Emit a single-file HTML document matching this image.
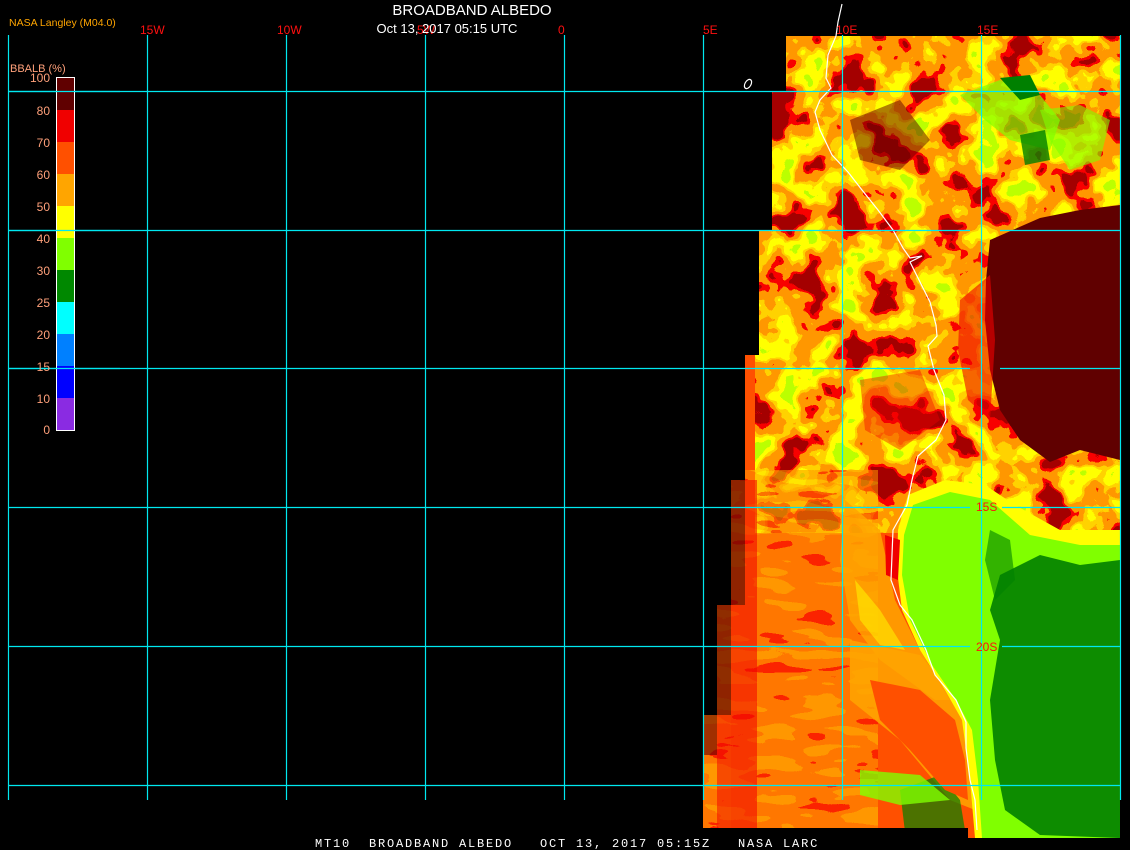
<!DOCTYPE html>
<html><head><meta charset="utf-8"><style>
html,body{margin:0;padding:0;background:#000;width:1130px;height:850px;overflow:hidden}
svg{display:block}
</style></head><body>
<svg width="1130" height="850" xmlns="http://www.w3.org/2000/svg">
<defs>
<clipPath id="data"><path d="M786,36 H1120 V838 H968 V828 H703 V715 H717 V605 H731 V480 H745 V355 H759 V230 H772 V91 H786 Z"/></clipPath>
<filter id="mot" x="0" y="0" width="100%" height="100%">
<feTurbulence type="fractalNoise" baseFrequency="0.03" numOctaves="3" seed="7" result="n"/>
<feColorMatrix in="n" type="matrix" values="1.8 0 0 0 -0.4  1.8 0 0 0 -0.4  1.8 0 0 0 -0.4  0 0 0 0 1"/>
<feComponentTransfer>
<feFuncR type="discrete" tableValues="0.376 0.376 0.94 1 1 1 1 1 0.5"/>
<feFuncG type="discrete" tableValues="0 0 0 0.31 0.31 0.65 1 1 1"/>
<feFuncB type="discrete" tableValues="0 0 0 0 0 0 0 0 0"/>
</feComponentTransfer>
</filter>
<filter id="mot2" x="0" y="0" width="100%" height="100%">
<feTurbulence type="fractalNoise" baseFrequency="0.02 0.08" numOctaves="2" seed="3" result="n"/>
<feColorMatrix in="n" type="matrix" values="1.8 0 0 0 -0.4  1.8 0 0 0 -0.4  1.8 0 0 0 -0.4  0 0 0 0 1"/>
<feComponentTransfer>
<feFuncR type="discrete" tableValues="0.94 1 1 1 1 1"/>
<feFuncG type="discrete" tableValues="0 0.31 0.31 0.31 0.65 0.65"/>
<feFuncB type="discrete" tableValues="0 0 0 0 0 0"/>
</feComponentTransfer>
</filter>
</defs>

<g clip-path="url(#data)">
<rect x="700" y="30" width="430" height="820" fill="#ff5000"/>
<rect x="755" y="33" width="370" height="500" filter="url(#mot)"/>
<path d="M960,95 L1000,80 L1040,95 L1060,120 L1050,150 L1010,140 L985,120 Z" fill="#80ff00" opacity="0.7"/>
<path d="M1000,78 L1030,75 L1040,95 L1020,100 Z" fill="#008000"/>
<path d="M1040,110 L1080,105 L1110,120 L1100,160 L1070,170 L1050,140 Z" fill="#80ff00" opacity="0.6"/>
<path d="M1020,135 L1045,130 L1050,160 L1025,165 Z" fill="#008000" opacity="0.8"/>
<path d="M990,240 L1040,218 L1080,210 L1120,205 L1120,460 L1080,450 L1050,462 L1020,440 L1000,410 L990,370 L985,320 L986,280 Z" fill="#600000"/>
<path d="M960,300 L990,275 L995,340 L990,420 L968,400 L958,350 Z" fill="#f00000" opacity="0.6"/>
<path d="M850,120 L900,100 L930,140 L900,170 L860,160 Z" fill="#600000" opacity="0.5"/>
<path d="M860,380 L920,370 L940,420 L900,450 L865,430 Z" fill="#f00000" opacity="0.4"/>
<rect x="703" y="470" width="175" height="360" filter="url(#mot2)" opacity="0.55"/>
<rect x="731" y="480" width="14" height="125" fill="#600000" opacity="0.7"/>
<rect x="717" y="605" width="14" height="110" fill="#600000" opacity="0.7"/>
<rect x="703" y="715" width="14" height="40" fill="#600000" opacity="0.6"/>
<rect x="745" y="480" width="12" height="350" fill="#f00000" opacity="0.55"/>
<rect x="731" y="605" width="14" height="225" fill="#f00000" opacity="0.55"/>
<rect x="717" y="715" width="14" height="115" fill="#f00000" opacity="0.5"/>
<path d="M845,500 L880,530 L895,600 L920,650 L950,700 L935,700 L880,660 L850,620 L840,560 Z" fill="#ffa500" opacity="0.85"/>
<path d="M855,580 L880,610 L905,650 L880,645 L860,620 Z" fill="#ffff00" opacity="0.5"/>
<path d="M850,640 L920,655 L960,700 L968,760 L975,810 L950,800 L900,740 L850,700 Z" fill="#ffa500" opacity="0.85"/>
<path d="M908,495 L945,480 L985,485 L1015,505 L1060,530 L1120,530 L1120,838 L975,838 L970,780 L962,720 L945,690 L920,650 L902,610 L897,570 L898,530 Z" fill="#ffff00"/>
<path d="M913,505 L950,492 L990,500 L1030,535 L1080,545 L1120,545 L1120,838 L982,838 L978,780 L972,730 L956,700 L932,665 L910,620 L902,575 L904,535 Z" fill="#80ff00"/>
<path d="M1000,575 L1040,555 L1080,565 L1120,560 L1120,838 L1040,835 L1005,810 L995,760 L990,700 L1000,640 L990,610 Z" fill="#008000" opacity="0.9"/>
<path d="M990,530 L1010,540 L1015,580 L995,600 L985,560 Z" fill="#008000" opacity="0.6"/>
<path d="M900,790 L940,775 L960,800 L965,830 L905,832 Z" fill="#008000" opacity="0.7"/>
<path d="M860,770 L920,775 L950,800 L900,805 L860,795 Z" fill="#80ff00" opacity="0.8"/>
<path d="M870,680 L920,690 L955,720 L965,760 L968,800 L945,790 L910,750 L880,720 Z" fill="#ff5000"/>
<path d="M885,535 L900,540 L898,580 L886,575 Z" fill="#f00000"/>
</g>

<path d="M842,4 L838,22 L836,36 L828,55 L826,78 L831,88 L820,100 L815,112 L820,130 L832,155 L848,172 L862,190 L878,210 L893,230 L903,248 L910,258 L922,256 L910,262 L920,282 L930,302 L936,325 L937,336 L928,346 L934,370 L944,395 L946,420 L936,440 L918,456 L912,480 L907,505 L893,530 L891,580 L900,605 L912,620 L926,650 L935,675 L956,700 L966,722 L966,748 L970,780 L975,800 L977,830" fill="none" stroke="#fff" stroke-width="1.2"/>
<ellipse cx="748" cy="84" rx="3" ry="5" transform="rotate(30 748 84)" fill="none" stroke="#fff" stroke-width="1.2"/>

<g stroke="#00e8f0" stroke-width="1.2">
<line x1="8.5" y1="35" x2="8.5" y2="800"/>
<line x1="147.5" y1="35" x2="147.5" y2="800"/>
<line x1="286.5" y1="35" x2="286.5" y2="800"/>
<line x1="425.5" y1="35" x2="425.5" y2="800"/>
<line x1="564.5" y1="35" x2="564.5" y2="800"/>
<line x1="703.5" y1="35" x2="703.5" y2="800"/>
<line x1="842.5" y1="35" x2="842.5" y2="800"/>
<line x1="981.5" y1="35" x2="981.5" y2="800"/>
<line x1="1120.5" y1="35" x2="1120.5" y2="800"/>
<line x1="8" y1="91.5" x2="1120" y2="91.5"/>
<line x1="8" y1="230.5" x2="970" y2="230.5"/>
<line x1="1000" y1="230.5" x2="1120" y2="230.5"/>
<line x1="8" y1="368.5" x2="970" y2="368.5"/>
<line x1="1000" y1="368.5" x2="1120" y2="368.5"/>
<line x1="8" y1="507.5" x2="970" y2="507.5"/>
<line x1="1002" y1="507.5" x2="1120" y2="507.5"/>
<line x1="8" y1="646.5" x2="970" y2="646.5"/>
<line x1="1002" y1="646.5" x2="1120" y2="646.5"/>
<line x1="8" y1="785.5" x2="1120" y2="785.5"/>
</g>

<g>
<rect x="56" y="77" width="18" height="33" fill="#600000"/>
<rect x="56" y="110" width="18" height="32" fill="#f00000"/>
<rect x="56" y="142" width="18" height="32" fill="#ff5000"/>
<rect x="56" y="174" width="18" height="32" fill="#ffa500"/>
<rect x="56" y="206" width="18" height="32" fill="#ffff00"/>
<rect x="56" y="238" width="18" height="32" fill="#80ff00"/>
<rect x="56" y="270" width="18" height="32" fill="#008800"/>
<rect x="56" y="302" width="18" height="32" fill="#00ffff"/>
<rect x="56" y="334" width="18" height="32" fill="#0080ff"/>
<rect x="56" y="366" width="18" height="32" fill="#0000ff"/>
<rect x="56" y="398" width="18" height="32" fill="#8a2be2"/>
<rect x="56.5" y="77.5" width="18" height="353" fill="none" stroke="#fff" stroke-width="1"/>
</g>
<g stroke="#00e8f0" stroke-width="1.2">
<line x1="8" y1="91.5" x2="120" y2="91.5"/>
<line x1="8" y1="230.5" x2="120" y2="230.5"/>
<line x1="8" y1="368.5" x2="120" y2="368.5"/>
</g>
<g font-family="Liberation Sans, sans-serif" font-size="12" fill="#ffa07a" text-anchor="end">
<text x="50" y="82">100</text>
<text x="50" y="115">80</text>
<text x="50" y="147">70</text>
<text x="50" y="179">60</text>
<text x="50" y="211">50</text>
<text x="50" y="243">40</text>
<text x="50" y="275">30</text>
<text x="50" y="307">25</text>
<text x="50" y="339">20</text>
<text x="50" y="371">15</text>
<text x="50" y="403">10</text>
<text x="50" y="434">0</text>
</g>
<text x="10" y="72" font-family="Liberation Sans, sans-serif" font-size="11" fill="#ffa07a">BBALB (%)</text>

<text x="9" y="26" font-family="Liberation Sans, sans-serif" font-size="10.5" fill="#ffa500">NASA Langley (M04.0)</text>
<g font-family="Liberation Sans, sans-serif" font-size="12" fill="#ff1010">
<text x="140" y="34">15W</text>
<text x="277" y="34">10W</text>
<text x="417" y="34">5W</text>
<text x="558" y="34">0</text>
<text x="703" y="34">5E</text>
<text x="836" y="34">10E</text>
<text x="977" y="34">15E</text>
<text x="976" y="511">15S</text>
<text x="976" y="651">20S</text>
</g>
<text x="472" y="15" text-anchor="middle" font-family="Liberation Sans, sans-serif" font-size="15" fill="#fff">BROADBAND ALBEDO</text>
<text x="447" y="33" text-anchor="middle" font-family="Liberation Sans, sans-serif" font-size="13" fill="#fff">Oct 13, 2017 05:15 UTC</text>
<text x="315" y="847" font-family="Liberation Mono, monospace" font-size="12" letter-spacing="1.8" fill="#fff" xml:space="preserve">MT10  BROADBAND ALBEDO   OCT 13, 2017 05:15Z   NASA LARC</text>
</svg>
</body></html>
